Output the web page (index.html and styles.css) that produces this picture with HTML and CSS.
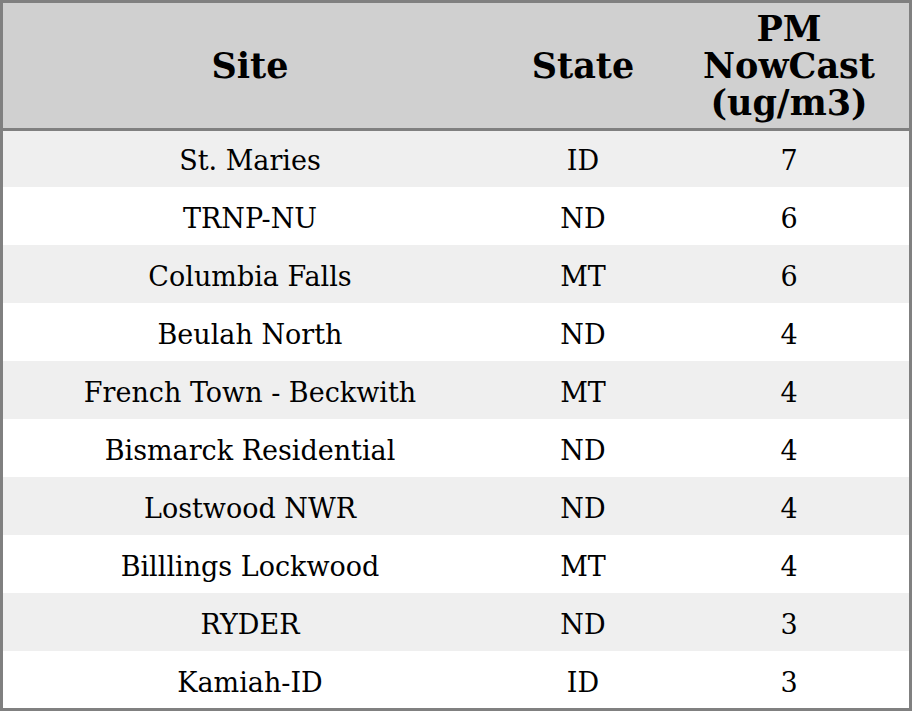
FILE: index.html
```html
<!DOCTYPE html>
<html>
<head>
<meta charset="utf-8">
<link rel="stylesheet" href="styles.css">
</head>
<body>
<table class="pm-table">
  <thead>
    <tr>
      <th class="col-site">Site</th>
      <th class="col-state">State</th>
      <th class="col-pm">PM<br>NowCast<br>(ug/m3)</th>
    </tr>
  </thead>
  <tbody>
    <tr><td>St. Maries</td><td>ID</td><td>7</td></tr>
    <tr><td>TRNP-NU</td><td>ND</td><td>6</td></tr>
    <tr><td>Columbia Falls</td><td>MT</td><td>6</td></tr>
    <tr><td>Beulah North</td><td>ND</td><td>4</td></tr>
    <tr><td>French Town - Beckwith</td><td>MT</td><td>4</td></tr>
    <tr><td>Bismarck Residential</td><td>ND</td><td>4</td></tr>
    <tr><td>Lostwood NWR</td><td>ND</td><td>4</td></tr>
    <tr><td>Billlings Lockwood</td><td>MT</td><td>4</td></tr>
    <tr><td>RYDER</td><td>ND</td><td>3</td></tr>
    <tr><td>Kamiah-ID</td><td>ID</td><td>3</td></tr>
  </tbody>
</table>
</body>
</html>
```
FILE: styles.css
```css
html, body {
  margin: 0;
  padding: 0;
  background: #ffffff;
}
.pm-table {
  width: 912px;
  border-collapse: separate;
  border-spacing: 0;
  border: 3px solid #808080;
  font-family: "DejaVu Serif", serif;
  color: #000;
  box-sizing: border-box;
}
.pm-table th {
  background: #d0d0d0;
  font-size: 35px;
  font-weight: bold;
  line-height: 37px;
  height: 111px;
  padding: 7px 0;
  border-bottom: 3px solid #808080;
  text-align: center;
  box-sizing: content-box;
}
.col-site { width: 494px; }
.col-state { width: 172px; }
.col-pm { width: 240px; }
.pm-table td {
  font-size: 27px;
  line-height: 28px;
  height: 28px;
  padding: 18px 0 12px;
  text-align: center;
  box-sizing: content-box;
}
.pm-table tbody tr:first-child td {
  padding-top: 16px;
}
.pm-table tbody tr:last-child td {
  padding-bottom: 11px;
}
.pm-table tbody tr:nth-child(odd) td {
  background: #efefef;
}
```
